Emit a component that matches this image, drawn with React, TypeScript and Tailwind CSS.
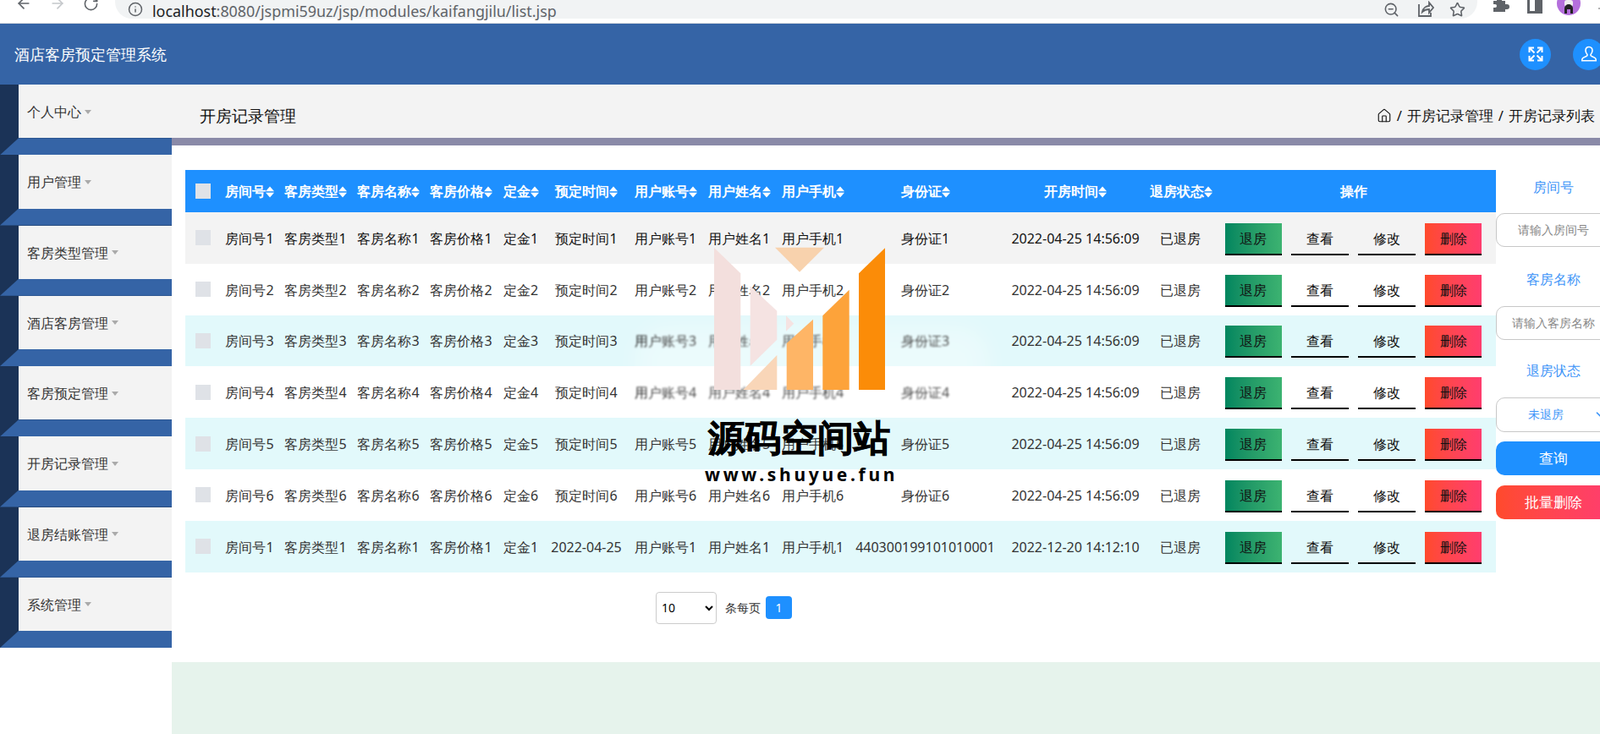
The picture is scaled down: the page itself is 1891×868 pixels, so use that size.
import React from 'react';
import { ArrowLeft, ArrowRight, RotateCw, Info, ZoomOut, Star, Home, ChevronDown } from 'lucide-react';

const menus = ['个人中心', '用户管理', '客房类型管理', '酒店客房管理', '客房预定管理', '开房记录管理', '退房结账管理', '系统管理'];

const headers = ['房间号', '客房类型', '客房名称', '客房价格', '定金', '预定时间', '用户账号', '用户姓名', '用户手机', '身份证', '开房时间', '退房状态'];

const rows = [1, 2, 3, 4, 5, 6].map((n) => [
  `房间号${n}`,
  `客房类型${n}`,
  `客房名称${n}`,
  `客房价格${n}`,
  `定金${n}`,
  `预定时间${n}`,
  `用户账号${n}`,
  `用户姓名${n}`,
  `用户手机${n}`,
  `身份证${n}`,
  '2022-04-25 14:56:09',
  '已退房',
]);
rows.push([
  '房间号1',
  '客房类型1',
  '客房名称1',
  '客房价格1',
  '定金1',
  '2022-04-25',
  '用户账号1',
  '用户姓名1',
  '用户手机1',
  '440300199101010001',
  '2022-12-20 14:12:10',
  '已退房',
]);

const rowBg = ['bg-[#f3f3f3] text-[#111]', 'bg-white text-[#333]', 'bg-[#e2f9fb] text-[#333]', 'bg-white text-[#333]', 'bg-[#e2f9fb] text-[#333]', 'bg-white text-[#333]', 'bg-[#e2f9fb] text-[#333]'];

const SortIcon = () => (
  <svg width="10" height="14" viewBox="0 0 10 14" className="inline-block align-[-2px] shrink-0" fill="#fff">
    <polygon points="0,6.2 5,0.5 10,6.2" />
    <polygon points="0,7.8 10,7.8 5,13.5" />
  </svg>
);

const Check = () => <div className="ml-[12px] h-[18px] w-[18px] bg-[#dfe2e7]" />;

const actionBase = 'flex h-[38px] w-[67.5px] items-center justify-center border-b-2 border-black text-[16px] text-[#111]';

const Actions = () => (
  <div className="mt-[3px] flex justify-center gap-[11.3px]">
    <button className={`${actionBase} bg-gradient-to-r from-[#00865f] to-[#3cb371]`}>退房</button>
    <button className={actionBase}>查看</button>
    <button className={actionBase}>修改</button>
    <button className={`${actionBase} bg-gradient-to-r from-[#ff4a2b] to-[#ff3d6e]`}>删除</button>
  </div>
);

const Watermark = () => (
  <>
    <div className="absolute left-[750px] top-[385px] h-[100px] w-[420px] rounded-[40px] bg-white/30 blur-md" />
    <svg className="absolute left-[844px] top-[292px]" width="202" height="170" viewBox="844 292 202 170">
      <polygon points="844,293 875.3,323.3 875.3,461 844,461" fill="#f3dfdd" />
      <polygon points="886.7,338.3 918.3,367.7 918.3,401.7 886.7,432.7" fill="#f5e3e2" />
      <polygon points="929,373.3 938.3,382.7 929,391.7" fill="#f5e3e2" />
      <polygon points="916,292.7 974,292.7 945,321.7" fill="#f8d2ad" />
      <polygon points="918.3,420 918.3,461 878.3,461" fill="#f9d6b8" />
      <polygon points="929.7,406 961,377.7 961,461 929.7,461" fill="#feb566" />
      <polygon points="972.3,373.3 1003.7,342.7 1003.7,461 972.3,461" fill="#fda33a" />
      <polygon points="1015,323.3 1046,293.3 1046,461 1015,461" fill="#fb8c08" />
    </svg>
    <div className="absolute left-[837px] top-[487px] whitespace-nowrap text-[43px] font-bold leading-[60px] text-black [-webkit-text-stroke:0.8px_black]">源码空间站</div>
    <div className="absolute left-[833px] top-[546px] whitespace-nowrap font-['Open_Sans',sans-serif] text-[21px] font-bold leading-[30px] tracking-[3.7px] text-black">www.shuyue.fun</div>
  </>
);

export default function App() {
  return (
    <div className="relative h-[868px] w-[1891px] overflow-hidden bg-white font-['Noto_Sans_CJK_SC','Liberation_Sans',sans-serif]">
      {/* browser bar */}
      <div className="relative h-[28px] overflow-hidden border-b border-[#dadce0] bg-white">
        <div className="flex h-[8px] items-center text-[#5f6368]">
          <ArrowLeft size={20} strokeWidth={2} className="ml-[18px]" />
          <ArrowRight size={20} strokeWidth={2} className="ml-[20px] text-[#c4c7ca]" />
          <RotateCw size={19} strokeWidth={2} className="ml-[20px]" />
          <div className="ml-[19px] flex h-[22px] w-[1610px] items-center self-start rounded-b-[20px] bg-[#f1f3f4]">
            <div className="flex h-[8px] w-full items-center">
              <Info size={18} strokeWidth={2} className="ml-[15px]" />
              <span className="ml-[11px] mt-[4px] font-['Roboto',sans-serif] text-[17.9px] font-normal text-[#5f6368]">
                <span className="text-[#202124]">localhost</span>:8080/jspmi59uz/jsp/modules/kaifangjilu/list.jsp
              </span>
              <ZoomOut size={19} strokeWidth={2} className="ml-auto" />
              <svg width="20" height="20" viewBox="0 0 20 20" fill="none" stroke="currentColor" strokeWidth="1.8" className="ml-[21px]">
                <path d="M2 4v14h14v-4M6 13c1-5 5-7 8-7V2l5 6-5 6v-4c-3 0-6 1-8 3z" />
              </svg>
              <Star size={19} strokeWidth={2} className="ml-[18px] mr-[14px]" />
            </div>
          </div>
          <svg width="20" height="20" viewBox="0 0 20 20" fill="currentColor" className="ml-[18px]">
            <path d="M1 7h4V5a3 3 0 0 1 6 0v2h4v4h2a3 3 0 0 1 0 6h-2v3H1v-5h2a2 2 0 0 0 0-4H1z" />
          </svg>
          <div className="ml-[21px] flex h-[24px] w-[18px] justify-end border-[3px] border-[#5f6368]">
            <div className="h-full w-[6px] bg-[#5f6368]" />
          </div>
          <svg width="28" height="28" viewBox="0 0 28 28" className="ml-[17px] shrink-0">
            <circle cx="14" cy="14" r="14" fill="#b46fdc" />
            <rect x="9" y="10" width="10" height="8" rx="3" fill="#eee" />
            <path d="M9 26v-6a5 5 0 0 1 10 0v6h-3v-5h-4v5z" fill="#222" />
          </svg>
          <div className="ml-[21px] h-[2px] w-[2px] translate-y-[6px] rounded-full bg-[#999]" />
        </div>
      </div>

      {/* top header */}
      <div className="flex h-[72px] items-center bg-[#3564a6] pl-[17px]">
        <span className="text-[18px] leading-none text-white">酒店客房预定管理系统</span>
        <div className="ml-auto flex h-[37px] w-[37px] items-center justify-center rounded-full bg-[#1e90ff]">
          <svg width="20" height="20" viewBox="0 0 20 20" fill="none" stroke="#fff" strokeWidth="2">
            <path d="M2.500 8V2.500H8M12 2.500h5.500V8M17.500 12v5.500H12M8 17.500H2.500V12M3 3l5.500 5.500M17 3l-5.500 5.500M17 17l-5.500-5.500M3 17l5.500-5.500" />
          </svg>
        </div>
        <div className="ml-[26px] mr-[-5px] flex h-[37px] w-[37px] shrink-0 items-center justify-center rounded-full bg-[#1e90ff]">
          <svg width="20" height="20" viewBox="0 0 20 20" fill="none" stroke="#fff" strokeWidth="1.6">
            <path d="M10 1.500c-2.700 0-4 2-4 4.300 0 2 .9 3.400 1.800 4.400.5.600.2 1.600-.5 2l-4.200 2.200c-.9.500-1.300 1.200-1.300 2.300v1h16.400v-1c0-1.100-.4-1.800-1.300-2.300l-4.200-2.200c-.7-.4-1-1.400-.5-2 .9-1 1.800-2.400 1.800-4.400 0-2.300-1.300-4.300-4-4.300z" />
          </svg>
        </div>
      </div>

      <div className="flex h-[768px]">
        {/* side menu */}
        <div className="w-[203px] shrink-0">
          {menus.map((m) => (
            <div key={m} className="h-[83.25px] bg-[#1b3357] pl-[22px]">
              <div className="ml-[-22px] pl-[22px]">
                <div className="flex h-[63.25px] items-center bg-[#f3f3f3] pl-[10px] pt-[1px] text-[16px] text-[#333]">
                  {m}
                  <span className="ml-[4px] h-0 w-0 border-x-[4px] border-t-[5px] border-x-transparent border-t-[#aaa]" />
                </div>
              </div>
              <div className="ml-[-22px] h-[20px] bg-[#3564a6] [clip-path:polygon(22px_0,100%_0,100%_100%,0_100%)]" />
            </div>
          ))}
        </div>

        {/* main */}
        <div className="flex min-w-0 flex-1 flex-col">
          <div className="flex h-[63px] shrink-0 items-center bg-[#f3f3f3] pl-[33px] pr-[6px] text-[#111]">
            <span className="mt-[12px] text-[19px]">开房记录管理</span>
            <div className="ml-auto mt-[12px] flex items-center gap-[6px] text-[16.6px]">
              <Home size={18} strokeWidth={1.5} />
              <span>/</span>
              <span>开房记录管理</span>
              <span>/</span>
              <span>开房记录列表</span>
            </div>
          </div>
          <div className="h-[9px] shrink-0 bg-[#8a8aa8]" />

          <div className="flex h-[611px] shrink-0 pl-[16px] pt-[29px]">
            <div className="w-[1549px] shrink-0">
              <table className="w-[1549px] table-fixed border-collapse text-center text-[16px]">
                <colgroup>
                  <col className="w-[41px]" />
                  <col className="w-[70px]" />
                  <col className="w-[86px]" />
                  <col className="w-[86px]" />
                  <col className="w-[86px]" />
                  <col className="w-[55px]" />
                  <col className="w-[100px]" />
                  <col className="w-[87px]" />
                  <col className="w-[87px]" />
                  <col className="w-[87px]" />
                  <col className="w-[179px]" />
                  <col className="w-[176px]" />
                  <col className="w-[72px]" />
                  <col className="w-[337px]" />
                </colgroup>
                <thead>
                  <tr className="h-[50px] bg-[#1e90ff] text-white">
                    <th className="p-0">
                      <Check />
                    </th>
                    {headers.map((h) => (
                      <th key={h} className="whitespace-nowrap p-0 font-bold">
                        {h}
                        <SortIcon />
                      </th>
                    ))}
                    <th className="p-0 font-bold">操作</th>
                  </tr>
                </thead>
                <tbody>
                  {rows.map((r, i) => (
                    <tr key={i} className={`h-[60.8px] ${rowBg[i]}`}>
                      <td className="p-0">
                        <Check />
                      </td>
                      {r.map((c, j) => {
                        // the logo sits over these cells in rows 3 and 4
                        const smudged = (i === 2 || i === 3) && j >= 6 && j <= 9;
                        return (
                          <td key={j} className="whitespace-nowrap p-0 pt-[1px]">
                            <span className={smudged ? 'inline-block text-black blur-[1px]' : ''}>{c}</span>
                          </td>
                        );
                      })}
                      <td className="p-0">
                        <Actions />
                      </td>
                    </tr>
                  ))}
                </tbody>
              </table>

              <div className="mt-[23px] flex items-center pl-[556px]">
                <select className="h-[38px] w-[72px] rounded-[4px] border border-[#ccc] bg-white pl-[2px] text-[14px] text-black">
                  <option>10</option>
                </select>
                <span className="ml-[10px] text-[14.4px] text-[#333]">条每页</span>
                <button className="ml-[6px] h-[27px] w-[31px] rounded-[4px] bg-[#1e90ff] text-[14px] text-white">1</button>
              </div>
            </div>

            {/* search panel */}
            <div className="w-[136px] shrink-0 text-center text-[16px] text-[#3f96f8]">
              <div className="flex h-[40px] items-center justify-center">房间号</div>
              <input placeholder="请输入房间号" className="mt-[11px] h-[40px] w-[136px] rounded-[10px] border border-[#c8c8c8] text-center text-[13.5px] placeholder:text-[#888]" />
              <div className="mt-[18px] flex h-[40px] items-center justify-center">客房名称</div>
              <input placeholder="请输入客房名称" className="mt-[12px] h-[40px] w-[136px] rounded-[10px] border border-[#c8c8c8] text-center text-[13.5px] placeholder:text-[#888]" />
              <div className="mt-[16px] flex h-[40px] items-center justify-center">退房状态</div>
              <div className="relative mt-[12px] h-[41px] w-[136px]">
                <select className="h-[41px] w-[136px] appearance-none rounded-[10px] border border-[#c8c8c8] bg-white pr-[18px] text-center text-[13.5px]">
                  <option>未退房</option>
                </select>
                <ChevronDown size={14} strokeWidth={3} className="absolute left-[116px] top-[13px]" />
              </div>
              <button className="mt-[11px] block h-[40px] w-[136px] rounded-[10px] bg-[#1e90ff] text-[16.5px] text-white">查询</button>
              <button className="mt-[12px] block h-[40px] w-[136px] rounded-[10px] bg-gradient-to-r from-[#ff4a2b] to-[#ff3d6e] text-[16.5px] font-medium text-white">批量删除</button>
            </div>
          </div>

          <div className="flex-1 bg-[#e6f3ec]" />
        </div>
      </div>

      <Watermark />
    </div>
  );
}
